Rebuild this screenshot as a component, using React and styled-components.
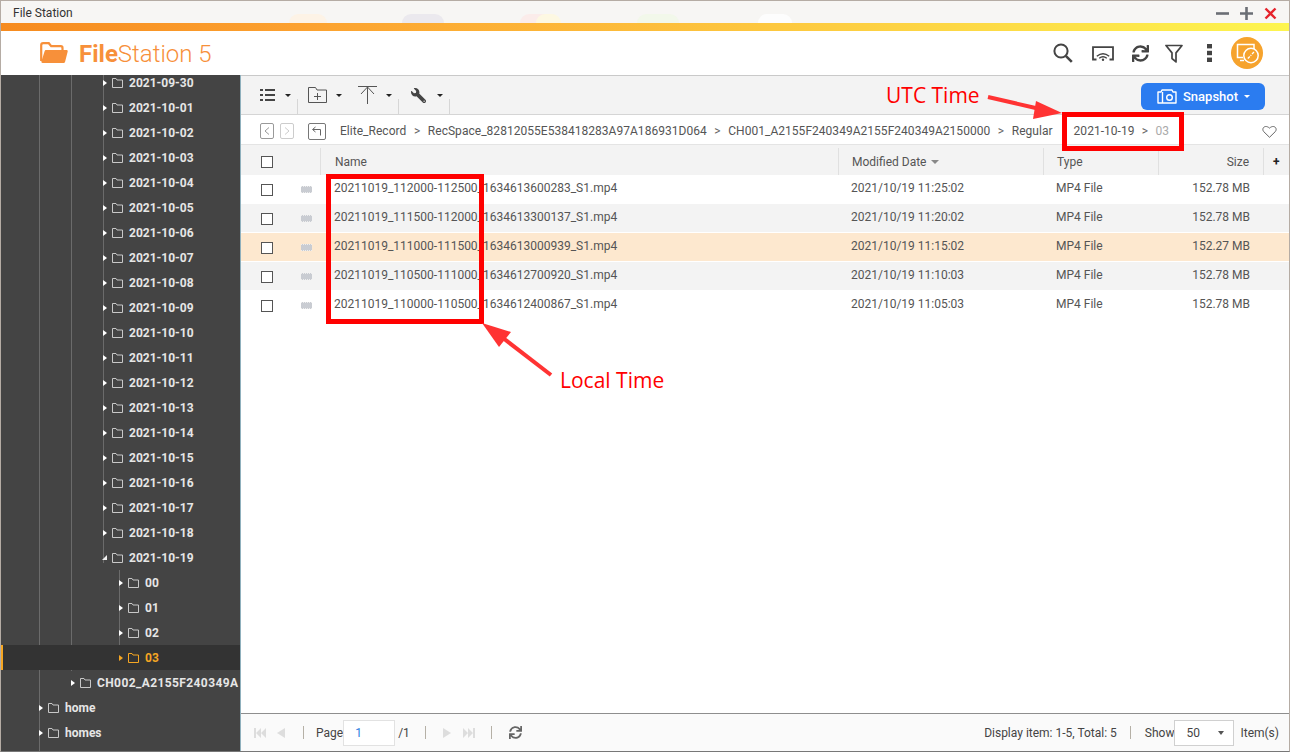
import React from "react";
import styled, { createGlobalStyle } from "styled-components";
import { FaSync, FaWrench } from "react-icons/fa";

const GlobalStyle = createGlobalStyle`
  html, body { margin: 0; padding: 0; background: #fff; }
  body { font-family: Roboto, "Liberation Sans", sans-serif; font-size: 12px; color: #444; }
  * { box-sizing: border-box; }
  svg { flex: none; }
`;

const dates = [
  "2021-09-30", "2021-10-01", "2021-10-02", "2021-10-03", "2021-10-04", "2021-10-05",
  "2021-10-06", "2021-10-07", "2021-10-08", "2021-10-09", "2021-10-10", "2021-10-11",
  "2021-10-12", "2021-10-13", "2021-10-14", "2021-10-15", "2021-10-16", "2021-10-17",
  "2021-10-18",
];

const files = [
  { name: "20211019_112000-112500_1634613600283_S1.mp4", date: "2021/10/19 11:25:02", size: "152.78 MB" },
  { name: "20211019_111500-112000_1634613300137_S1.mp4", date: "2021/10/19 11:20:02", size: "152.78 MB" },
  { name: "20211019_111000-111500_1634613000939_S1.mp4", date: "2021/10/19 11:15:02", size: "152.27 MB", selected: true },
  { name: "20211019_110500-111000_1634612700920_S1.mp4", date: "2021/10/19 11:10:03", size: "152.78 MB" },
  { name: "20211019_110000-110500_1634612400867_S1.mp4", date: "2021/10/19 11:05:03", size: "152.78 MB" },
];

const crumbs = ["Elite_Record", "RecSpace_82812055E538418283A97A186931D064", "CH001_A2155F240349A2155F240349A2150000"];

// faint desktop icons showing through the title bar
const blobs = [
  { x: 288, w: 38, c: "#fdf3e6" },
  { x: 401, w: 42, c: "#ebe9ee" },
  { x: 519, w: 40, c: "#fbecea" },
  { x: 535, w: 25, c: "#fdf8e2" },
  { x: 636, w: 42, c: "#f2f8ea" },
  { x: 757, w: 34, c: "#fdfdfd" },
];

const Window = styled.div`
  position: relative;
  width: 1290px;
  height: 752px;
  overflow: hidden;
  display: flex;
  flex-direction: column;
  border: 1px solid #b5aca4;
  border-bottom: 1px solid #777;
  background: #fff;
`;

const TitleBar = styled.div`
  position: relative;
  height: 22px;
  flex: none;
  display: flex;
  align-items: center;
  justify-content: space-between;
  padding: 2px 12px 0 12px;
  background: #f7f6f4;
  color: #333;
  font-size: 12px;
`;

const TitleBlob = styled.i`
  position: absolute;
  bottom: 0;
  height: 9px;
  left: ${(p) => p.$x}px;
  width: ${(p) => p.$w}px;
  background: ${(p) => p.$c};
  border-radius: 9px 9px 0 0;
`;

const TitleText = styled.span`
  position: relative;
`;

const WinButtons = styled.div`
  position: relative;
  display: flex;
  align-items: center;
  gap: 11px;
`;

const ColorBar = styled.div`
  height: 8px;
  flex: none;
  background: linear-gradient(90deg, #f68b1f 0%, #fca12f 23%, #fdc83f 60%, #fdf550 100%);
`;

const AppHeader = styled.div`
  height: 44px;
  flex: none;
  display: flex;
  align-items: center;
  justify-content: space-between;
  padding: 0 26px 0 39px;
  background: #fff;
`;

const Brand = styled.div`
  display: flex;
  align-items: center;
  gap: 11px;
  font-size: 24px;
  line-height: 1;
  color: #f7903a;
  b { font-weight: 700; }
  span { font-weight: 300; }
`;

const BrandName = styled.div`
  margin-top: 2px;
`;

const HeaderIcons = styled.div`
  display: flex;
  align-items: center;
`;

const HeaderIcon = styled.span`
  display: flex;
  color: #444;
  margin-right: ${(p) => p.$gap}px;
`;

const Avatar = styled.span`
  width: 32px;
  height: 32px;
  border-radius: 50%;
  background: #f6a32d;
  display: flex;
  align-items: center;
  justify-content: center;
`;

const Body = styled.div`
  flex: 1;
  min-height: 0;
  display: flex;
`;

const Sidebar = styled.div`
  position: relative;
  width: 239px;
  flex: none;
  overflow: hidden;
  background: #444;
`;

const TreeList = styled.div`
  margin-top: -5px;
`;

const TreeLine = styled.i`
  position: absolute;
  top: ${(p) => p.$top || 0}px;
  left: ${(p) => p.$left}px;
  height: ${(p) => p.$height}px;
  width: 1px;
  background: #6b6b6b;
`;

const TreeRow = styled.div`
  position: relative;
  height: 25px;
  display: flex;
  align-items: center;
  padding-left: ${(p) => p.$indent}px;
  font-weight: 700;
  font-size: 12px;
  white-space: nowrap;
  color: ${(p) => (p.$active ? "#f5a623" : "#e6e6e6")};
  background: ${(p) => (p.$active ? "#333" : "transparent")};
  border-left: ${(p) => (p.$active ? "2px solid #f5a623" : "none")};
`;

const Caret = styled.span`
  width: 0;
  height: 0;
  flex: none;
  margin-right: 5px;
  border-style: solid;
  ${(p) =>
    p.$open
      ? `border-width: 0 0 5px 5px; border-color: transparent transparent #eee transparent;`
      : `border-width: 3px 0 3px 4px; border-color: transparent transparent transparent ${p.$color};`}
  margin-left: ${(p) => (p.$open ? "-1px" : "0")};
`;

const TreeLabel = styled.span`
  margin-left: 6px;
  letter-spacing: ${(p) => p.$spread || 0}px;
`;

const Main = styled.div`
  flex: 1;
  min-width: 0;
  display: flex;
  flex-direction: column;
  border-left: 1px solid #8fb0bd;
  background: #fff;
`;

const Toolbar = styled.div`
  height: 40px;
  flex: none;
  display: flex;
  align-items: stretch;
  justify-content: space-between;
  padding-right: 24px;
  background: #f3f3f3;
  border-top: 1px solid #c9c9c9;
  border-bottom: 1px solid #d5d5d5;
`;

const ToolGroup = styled.div`
  display: flex;
`;

const ToolButton = styled.div`
  position: relative;
  width: ${(p) => p.$width}px;
  display: flex;
  align-items: center;
  padding-left: ${(p) => p.$pad}px;
  gap: ${(p) => p.$gap}px;
  &::after {
    content: "";
    position: absolute;
    right: 0;
    bottom: 0;
    width: 1px;
    height: 15px;
    background: #d6d6d6;
  }
`;

const DropCaret = styled.span`
  width: 0;
  height: 0;
  flex: none;
  border-style: solid;
  border-width: ${(p) => p.$h || 3}px ${(p) => p.$w || 3}px 0 ${(p) => p.$w || 3}px;
  border-color: ${(p) => p.$color || "#222"} transparent transparent transparent;
`;

const SnapshotButton = styled.button`
  align-self: flex-start;
  margin-top: 7px;
  width: 124px;
  height: 27px;
  border: 0;
  border-radius: 6px;
  background: #2b7cf0;
  color: #fff;
  font: 500 13px Roboto, sans-serif;
  display: flex;
  align-items: center;
  padding: 0 0 0 16px;
  gap: 6px;
`;

const Crumbs = styled.div`
  height: 30px;
  flex: none;
  display: flex;
  align-items: center;
  padding: 3px 12px 0 19px;
  background: #fff;
  border-bottom: 1px solid #e4e4e4;
  color: #555;
`;

const NavBox = styled.span`
  width: ${(p) => p.$w}px;
  height: ${(p) => p.$h}px;
  margin-right: ${(p) => p.$gap}px;
  border: 1px solid ${(p) => p.$color};
  border-radius: 2px;
  display: flex;
  align-items: center;
  justify-content: center;
  flex: none;
`;

const Crumb = styled.span`
  color: ${(p) => (p.$dim ? "#aaa" : "#555")};
  white-space: nowrap;
  letter-spacing: 0.03px;
`;

const CrumbSep = styled.span`
  width: ${(p) => p.$width || 21.5}px;
  text-align: center;
  flex: none;
  color: #666;
`;

const Spacer = styled.span`
  flex: 1;
`;

const gridColumns = "80px 518px 205px 115px 105px 1fr";

const HeadRow = styled.div`
  height: 30px;
  flex: none;
  display: grid;
  grid-template-columns: ${gridColumns};
  background: #f3f3f3;
  color: #555;
`;

const HeadCell = styled.div`
  display: flex;
  align-items: center;
  gap: 5px;
  justify-content: ${(p) => (p.$right ? "flex-end" : "flex-start")};
  padding: ${(p) => (p.$right ? "0 14px 0 0" : `0 0 0 ${p.$pad ?? 13}px`)};
  border-right: ${(p) => (p.$last ? "0" : "1px solid #e0e0e0")};
  margin: 3px 0 0;
`;

const FileRow = styled.div`
  height: 29px;
  display: grid;
  grid-template-columns: ${gridColumns};
  align-items: center;
  color: #555;
  background: ${(p) => (p.$selected ? "#fde8cf" : p.$odd ? "#f3f3f3" : "#fff")};
  border-bottom: 1px solid #fff;
`;

const Cell = styled.div`
  white-space: nowrap;
  padding-left: ${(p) => p.$pad ?? 12}px;
  padding-right: ${(p) => p.$padRight ?? 0}px;
  text-align: ${(p) => (p.$right ? "right" : "left")};
  margin-top: -2px;
`;

const CheckCell = styled.div`
  display: flex;
  align-items: center;
  padding-left: 20px;
  margin-top: 1px;
`;

const Checkbox = styled.span`
  width: 12px;
  height: 12px;
  background: #fff;
  border: 1px solid #555;
  display: block;
  flex: none;
`;

const FileThumb = styled.span`
  width: 11px;
  height: 7px;
  margin-left: 28px;
  background: #c9ccd2;
  border-top: 1px dotted #eee;
  border-bottom: 1px dotted #eee;
  display: block;
`;

const FileList = styled.div`
  flex: 1;
  min-height: 0;
`;

const Pager = styled.div`
  height: 38px;
  flex: none;
  display: flex;
  align-items: center;
  padding-left: 13px;
  background: #fafafa;
  border-top: 1px solid #8e8e8e;
  color: #444;
`;

const PagerDivider = styled.span`
  width: 1px;
  height: 13px;
  margin: 0 ${(p) => p.$right ?? 13}px 0 ${(p) => p.$left ?? 13}px;
  background: #b5b0a6;
  flex: none;
`;

const PageInput = styled.span`
  width: 52px;
  height: 26px;
  margin: 0 3px 0 0;
  padding-left: 11px;
  display: flex;
  align-items: center;
  background: #fff;
  border: 1px solid #e2e2e2;
  color: #2f80e0;
`;

const ShowSelect = styled.span`
  width: 60px;
  height: 26px;
  margin: 0 6px 0 0;
  padding: 0 9px 0 11px;
  display: flex;
  align-items: center;
  justify-content: space-between;
  background: #fff;
  border: 1px solid #d0d0d0;
`;

const PagerIcons = styled.span`
  display: flex;
  align-items: center;
  gap: ${(p) => p.$gap}px;
`;

const PagerRefresh = styled.span`
  display: flex;
  color: #666;
`;

const ItemsLabel = styled.span`
  margin-right: 10px;
`;

const RedBox = styled.div`
  position: absolute;
  left: ${(p) => p.$x}px;
  top: ${(p) => p.$y}px;
  width: ${(p) => p.$w}px;
  height: ${(p) => p.$h}px;
  border: ${(p) => p.$b}px solid #ff0000;
`;

const Note = styled.div`
  position: absolute;
  left: ${(p) => p.$x}px;
  top: ${(p) => p.$y}px;
  font-family: "Open Sans", sans-serif;
  font-size: 21px;
  font-weight: 500;
  line-height: 24px;
  color: #ff0000;
  white-space: nowrap;
`;

const ArrowLayer = styled.svg`
  position: absolute;
  left: -1px;
  top: -1px;
  pointer-events: none;
`;

const PlusMark = styled.b`
  color: #222;
  font-size: 12px;
  margin-left: 9px;
`;

const WrenchIcon = styled(FaWrench)`
  transform: scaleX(-1);
  color: #444;
`;

function FolderIcon({ color }) {
  return (
    <svg width="11" height="10" viewBox="0 0 11 10" fill="none" stroke={color} strokeWidth="1">
      <path d="M.5 9.500V.5h3.500l1 1.500h5.500v7.500z" />
    </svg>
  );
}

function TreeItem({ label, indent, active, open, spread }) {
  const color = active ? "#f5a623" : "#fff";
  return (
    <TreeRow $indent={active ? indent - 2 : indent} $active={active}>
      <Caret $open={open} $color={color} />
      <FolderIcon color={active ? "#f5a623" : "#c8c8c8"} />
      <TreeLabel $spread={spread}>{label}</TreeLabel>
    </TreeRow>
  );
}

export default function App() {
  return (
    <>
      <GlobalStyle />
      <Window>
        <TitleBar>
          {blobs.map((b) => (
            <TitleBlob key={b.x} $x={b.x} $w={b.w} $c={b.c} />
          ))}
          <TitleText>File Station</TitleText>
          <WinButtons>
            <svg width="13" height="13" viewBox="0 0 13 13"><path d="M0 6.500h13" stroke="#6b6f75" strokeWidth="2.600" /></svg>
            <svg width="13" height="13" viewBox="0 0 13 13"><path d="M0 6.500h13M6.500 0v13" stroke="#6b6f75" strokeWidth="2.600" /></svg>
            <svg width="13" height="13" viewBox="0 0 13 13"><path d="M1.500 1.500l10 10M11.500 1.500l-10 10" stroke="#e5232b" strokeWidth="2.400" /></svg>
          </WinButtons>
        </TitleBar>
        <ColorBar />
        <AppHeader>
          <Brand>
            <svg width="28" height="22" viewBox="0 0 28 22" fill="none">
              <path d="M1.200 19V3.200C1.200 2 2 1.200 3.200 1.200h5.600l2.400 3h9.600c1 0 1.700.7 1.700 1.700V8" stroke="#f7903a" strokeWidth="2.200" />
              <path d="M6.200 8h20.300c.9 0 1.400.7 1.200 1.500l-2.600 10.300c-.2.8-.9 1.200-1.600 1.200H2.600c-.9 0-1.400-.8-1.200-1.500L4.600 9.200C4.800 8.500 5.400 8 6.200 8z" fill="#f7903a" />
            </svg>
            <BrandName><b>File</b><span>Station 5</span></BrandName>
          </Brand>
          <HeaderIcons>
            <HeaderIcon $gap={19}>
              <svg width="20" height="20" viewBox="0 0 20 20" fill="none" stroke="#444" strokeWidth="2">
                <circle cx="8" cy="8" r="6.600" />
                <path d="M12.800 12.800l6 6" strokeWidth="2.600" />
              </svg>
            </HeaderIcon>
            <HeaderIcon $gap={18}>
              <svg width="22" height="15" viewBox="0 0 22 15" fill="none" stroke="#444">
                <path d="M4.500 13.500H1V1.100h20v12.400h-3.500" strokeWidth="1.800" />
                <path d="M4.800 10.300c4-3.400 8.400-3.400 12.400 0M7.200 12.200c2.600-2 5-2 7.600 0" strokeWidth="1.400" />
                <circle cx="11" cy="13.700" r="1.200" fill="#444" stroke="none" />
              </svg>
            </HeaderIcon>
            <HeaderIcon $gap={16}>
              <FaSync size={17} />
            </HeaderIcon>
            <HeaderIcon $gap={24}>
              <svg width="18" height="19" viewBox="0 0 18 19" fill="none" stroke="#444" strokeWidth="1.700">
                <path d="M1 1.500h16l-6 7.400v9l-4-3.400V8.900z" strokeLinejoin="round" />
              </svg>
            </HeaderIcon>
            <HeaderIcon $gap={19}>
              <svg width="5" height="18" viewBox="0 0 5 18" fill="#444">
                <rect width="5" height="4.400" x="0" y="0" />
                <rect width="5" height="4.400" x="0" y="6.800" />
                <rect width="5" height="4.400" x="0" y="13.600" />
              </svg>
            </HeaderIcon>
            <Avatar>
              <svg width="26" height="22" viewBox="0 0 26 22" fill="none" stroke="#fff" strokeWidth="1.500">
                <path d="M9 15.500H3.500V2.500H20V7" />
                <path d="M6 18.500h4" />
                <circle cx="17" cy="13.500" r="7.200" fill="#f6a32d" />
                <path d="M13.800 16.500l2-2M16.500 13.800l.8-.8M18 12l2-2" strokeWidth="1.300" />
              </svg>
            </Avatar>
          </HeaderIcons>
        </AppHeader>
        <Body>
          <Sidebar>
            <TreeLine $left={38} $height={677} />
            <TreeLine $left={70} $height={596} />
            <TreeLine $left={102} $height={488} />
            <TreeLine $left={118} $top={495} $height={90} />
            <TreeList>
              {dates.map((d) => (
                <TreeItem key={d} label={d} indent={102} />
              ))}
              <TreeItem label="2021-10-19" indent={102} open />
              <TreeItem label="00" indent={118} />
              <TreeItem label="01" indent={118} />
              <TreeItem label="02" indent={118} />
              <TreeItem label="03" indent={118} active />
              <TreeItem label="CH002_A2155F240349A" indent={70} spread={0.4} />
              <TreeItem label="home" indent={38} />
              <TreeItem label="homes" indent={38} />
            </TreeList>
          </Sidebar>
          <Main>
            <Toolbar>
              <ToolGroup>
                <ToolButton $width={57} $pad={19} $gap={10}>
                  <svg width="15" height="12" viewBox="0 0 15 12" fill="#444">
                    <rect x="0" y="0" width="3" height="2" /><rect x="5" y="0" width="10" height="2" />
                    <rect x="0" y="5" width="3" height="2" /><rect x="5" y="5" width="10" height="2" />
                    <rect x="0" y="10" width="3" height="2" /><rect x="5" y="10" width="10" height="2" />
                  </svg>
                  <DropCaret />
                </ToolButton>
                <ToolButton $width={101} $pad={10} $gap={9}>
                  <svg width="19" height="16" viewBox="0 0 19 16" fill="none" stroke="#555">
                    <path d="M.5 15.500V.5h7l1.500 2.500h9.500v12.500z" />
                    <path d="M9.500 6v7M6 9.500h7" />
                  </svg>
                  <DropCaret />
                  <svg width="19" height="18" viewBox="0 0 19 18" fill="none" stroke="#555" style={{ marginLeft: 7 }}>
                    <path d="M0 .5h19M9.500 18V1M3 8l6.500-7 6.500 7" />
                  </svg>
                  <DropCaret />
                </ToolButton>
                <ToolButton $width={51} $pad={12} $gap={11}>
                  <WrenchIcon size={15} />
                  <DropCaret />
                </ToolButton>
              </ToolGroup>
              <SnapshotButton>
                <svg width="20" height="15" viewBox="0 0 20 15" fill="none" stroke="#fff" strokeWidth="1.400">
                  <path d="M1 3h3l1-2h10l1 2h3v11H1z" strokeLinejoin="round" />
                  <path d="M5.500 3v11" />
                  <circle cx="12.500" cy="8.500" r="2.800" />
                </svg>
                <span>Snapshot</span>
                <DropCaret $color="#fff" />
              </SnapshotButton>
            </Toolbar>
            <Crumbs>
              <NavBox $w={14} $h={16} $gap={6} $color="#999">
                <svg width="6" height="8" viewBox="0 0 6 8" fill="none" stroke="#999"><path d="M5 .5L1 4l4 3.500" /></svg>
              </NavBox>
              <NavBox $w={14} $h={16} $gap={14} $color="#ccc">
                <svg width="6" height="8" viewBox="0 0 6 8" fill="none" stroke="#ccc"><path d="M1 .5L5 4 1 7.500" /></svg>
              </NavBox>
              <NavBox $w={18} $h={17} $gap={14} $color="#777">
                <svg width="12" height="10" viewBox="0 0 12 10" fill="none" stroke="#666"><path d="M4.500 1L1.500 3.500 4.500 6M2 3.500h7.500v6" /></svg>
              </NavBox>
              {crumbs.map((c) => (
                <React.Fragment key={c}>
                  <Crumb>{c}</Crumb>
                  <CrumbSep>&gt;</CrumbSep>
                </React.Fragment>
              ))}
              <Crumb>Regular</Crumb>
              <CrumbSep $width={21} />
              <Crumb>2021-10-19</Crumb>
              <CrumbSep $width={21}>&gt;</CrumbSep>
              <Crumb $dim>03</Crumb>
              <Spacer />
              <svg width="15" height="13" viewBox="0 0 15 13" fill="none" stroke="#666">
                <path d="M7.500 12.300L1.700 6.600C-.9 3.500 2.900-.9 7.500 3.100c4.600-4 8.400.4 5.800 3.500z" />
              </svg>
            </Crumbs>
            <HeadRow>
              <HeadCell $pad={20}><Checkbox /></HeadCell>
              <HeadCell $pad={14}>Name</HeadCell>
              <HeadCell>Modified Date <DropCaret $color="#888" $w={4} $h={4} /></HeadCell>
              <HeadCell>Type</HeadCell>
              <HeadCell $right>Size</HeadCell>
              <HeadCell $last $pad={0}><PlusMark>+</PlusMark></HeadCell>
            </HeadRow>
            <FileList>
              {files.map((f, i) => (
                <FileRow key={f.name} $odd={i % 2 === 1} $selected={f.selected}>
                  <CheckCell>
                    <Checkbox />
                    <FileThumb />
                  </CheckCell>
                  <Cell $pad={13}>{f.name}</Cell>
                  <Cell>{f.date}</Cell>
                  <Cell>MP4 File</Cell>
                  <Cell $right $padRight={14}>{f.size}</Cell>
                  <Cell />
                </FileRow>
              ))}
            </FileList>
            <Pager>
              <PagerIcons $gap={11}>
                <svg width="12" height="10" viewBox="0 0 12 10" fill="#ddd"><path d="M0 0h2v10H0zM7 0v10L2 5zM12 0v10L7 5z" /></svg>
                <svg width="8" height="10" viewBox="0 0 8 10" fill="#ddd"><path d="M8 0v10L0 5z" /></svg>
              </PagerIcons>
              <PagerDivider $left={18} $right={12} />
              <span>Page</span>
              <PageInput>1</PageInput>
              <span>/1</span>
              <PagerDivider $left={15} $right={17} />
              <PagerIcons $gap={12}>
                <svg width="8" height="10" viewBox="0 0 8 10" fill="#ddd"><path d="M0 0v10l8-5z" /></svg>
                <svg width="12" height="10" viewBox="0 0 12 10" fill="#ddd"><path d="M0 0v10l5-5zM5 0v10l5-5zM10 0h2v10h-2z" /></svg>
              </PagerIcons>
              <PagerDivider $left={16} $right={17} />
              <PagerRefresh><FaSync size={13} /></PagerRefresh>
              <Spacer />
              <span>Display item: 1-5, Total: 5</span>
              <PagerDivider $left={13} $right={14} />
              <span>Show</span>
              <ShowSelect>
                <span>50</span>
                <DropCaret $color="#555" $w={3.500} $h={4} />
              </ShowSelect>
              <ItemsLabel>Item(s)</ItemsLabel>
            </Pager>
          </Main>
        </Body>
        <RedBox $x={1061} $y={111} $w={122} $h={39} $b={5} />
        <RedBox $x={325} $y={173} $w={158} $h={150} $b={5} />
        <Note $x={885} $y={82}>UTC Time</Note>
        <Note $x={559} $y={367}>Local Time</Note>
        <ArrowLayer width="1290" height="752" viewBox="0 0 1290 752">
          <path d="M988 97L1040 109" stroke="#ff3333" strokeWidth="4" />
          <path d="M1062 113L1033 119L1036 101z" fill="#ff3333" />
          <path d="M551 375L503 338" stroke="#ff3333" strokeWidth="4" />
          <path d="M482 323L511 332L499 347z" fill="#ff3333" />
        </ArrowLayer>
      </Window>
    </>
  );
}
